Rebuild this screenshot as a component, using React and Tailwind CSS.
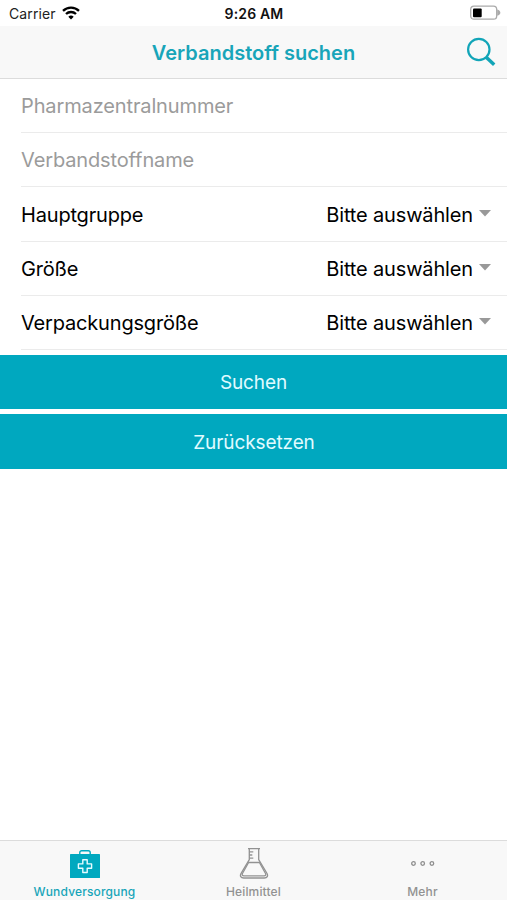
const selects = [
  { label: "Hauptgruppe", height: "h-[55px] pt-[1px]" },
  { label: "Größe", height: "h-[54px]" },
  { label: "Verpackungsgröße", height: "h-[54px]" },
];

function StatusBar() {
  return (
    <div className="relative flex h-[26px] items-center justify-between pr-[6px] pl-[9px] text-[14px] text-[#222]">
      <div className="flex items-center gap-[6px]">
        <span className="pt-[1px] tracking-[0.1px]">Carrier</span>
        <svg width="18" height="14" viewBox="0 0 18 14" fill="none" stroke="#000" strokeWidth="2.3">
          <path d="M1 4.9a11.4 11.4 0 0 1 16 0" />
          <path d="M4 8a7.2 7.2 0 0 1 10 0" />
          <path d="M9 13.6 6.3 10.8a3.9 3.9 0 0 1 5.4 0Z" fill="#000" stroke="none" />
        </svg>
      </div>
      <span className="absolute inset-x-0 pt-[1px] pl-[1px] text-center font-semibold tracking-[0.15px] text-[#111]">9:26 AM</span>
      <svg width="31" height="16" viewBox="0 0 31 16">
        <rect x="0.7" y="1.2" width="26" height="13" rx="3.2" fill="#fff" stroke="#aaa" strokeWidth="1.3" />
        <rect x="3" y="3.5" width="8.7" height="8.7" rx="1" fill="#000" />
        <path d="M27.2 4.6c4.2 1.2 4.2 5 0 6.200Z" fill="#aaa" />
      </svg>
    </div>
  );
}

function Tab({ icon, label, className }) {
  return (
    <div className={`flex flex-1 flex-col items-center ${className}`}>
      <div className="flex h-[43px] items-end">{icon}</div>
      <span className="text-[12px] leading-[16px] font-medium tracking-[0.15px]">{label}</span>
    </div>
  );
}

const caseIcon = (
  <svg className="mb-[5px]" width="30" height="30" viewBox="0 0 30 30" fill="none">
    <path d="M9.8 6V3.5a1.8 1.8 0 0 1 1.8-1.8h6.8a1.8 1.8 0 0 1 1.8 1.8V6" stroke="#00a8bf" strokeWidth="1.4" />
    <rect y="5" width="30" height="24" rx="0.6" fill="#00a8bf" />
    <path d="M12.800 10.700h4.400v4.200h4.400v4.300h-4.400v4.300h-4.400v-4.300H8.400v-4.300h4.400Z" stroke="#e6fbff" strokeWidth="1.400" strokeLinejoin="round" />
  </svg>
);

const flaskIcon = (
  <svg className="mb-[5px]" width="30" height="32" viewBox="0 0 30 32" fill="none" stroke="#929292" strokeWidth="1.3" strokeLinejoin="round">
    <path d="M9 1.700h12M10.300 1.700v11L2.100 26.300c-1.500 2.600-.3 4.700 2.600 4.700h20.600c2.900 0 4.100-2.100 2.600-4.700L19.700 12.700v-11" />
    <path d="M9.600 15.500h10.800l6 10.800c.9 1.600.2 2.500-1.300 2.500H4.900c-1.500 0-2.200-.9-1.300-2.500Z" />
    <path d="M10.300 4.900h4M10.300 8h3M10.300 11.100h4" />
  </svg>
);

const moreIcon = (
  <svg className="mb-[17px]" width="24" height="7" viewBox="0 0 24 7" fill="none" stroke="#8e8e8e" strokeWidth="1.300">
    <circle cx="2.500" cy="3.500" r="1.800" />
    <circle cx="11.700" cy="3.500" r="1.800" />
    <circle cx="20.900" cy="3.500" r="1.800" />
  </svg>
);

export default function App() {
  return (
    <div className="flex h-[900px] w-[507px] flex-col overflow-hidden bg-white font-['Inter','Liberation_Sans',sans-serif]">
      <StatusBar />
      <header className="relative flex h-[53px] items-center justify-center border-b border-[#dcdcdc] bg-[#f8f8f8]">
        <h1 className="pt-[1px] text-[20px] font-semibold text-[#18a5b9]">Verbandstoff suchen</h1>
        <svg className="absolute top-[11px] right-[11px]" width="30" height="30" viewBox="0 0 30 30" fill="none" stroke="#12a5b8">
          <circle cx="12.800" cy="12.500" r="10.700" strokeWidth="2.200" />
          <path d="m20.200 20.200 8 7.600" strokeWidth="3.500" />
        </svg>
      </header>
      <main className="flex-1">
        <div className="ml-[21px] text-[20px] tracking-[-0.15px] text-black">
          <div className="flex h-[54px] items-center border-b border-[#ebebeb] pt-[1px] tracking-[-0.13px] text-[#9b9b9b]">Pharmazentralnummer</div>
          <div className="flex h-[54px] items-center border-b border-[#ebebeb] pt-[1px] tracking-[-0.13px] text-[#9b9b9b]">Verbandstoffname</div>
          {selects.map((s) => (
            <div key={s.label} className={`flex items-center justify-between border-b border-[#ebebeb] pr-[16px] ${s.height}`}>
              <span className="tracking-[-0.18px]">{s.label}</span>
              <div className="flex items-center gap-[6px]">
                <span>Bitte auswählen</span>
                <svg className="mb-[3px]" width="12" height="7" viewBox="0 0 12 7">
                  <path d="M0 0h12L6 6.500Z" fill="#999" />
                </svg>
              </div>
            </div>
          ))}
        </div>
        <div className="mt-[5px] flex flex-col gap-[5px] text-[19px] tracking-[-0.1px] text-[#e0fbff]">
          <button className="h-[54px] bg-[#00a8bf] pt-[3px]">Suchen</button>
          <button className="h-[55px] bg-[#00a8bf] pt-[3px] pl-[1px]">Zurücksetzen</button>
        </div>
      </main>
      <nav className="flex h-[60px] border-t border-[#dcdcdc] bg-[#f8f8f8]">
        <Tab icon={caseIcon} label="Wundversorgung" className="text-[#18a5b9]" />
        <Tab icon={flaskIcon} label="Heilmittel" className="text-[#929292]" />
        <Tab icon={moreIcon} label="Mehr" className="text-[#929292]" />
      </nav>
    </div>
  );
}
